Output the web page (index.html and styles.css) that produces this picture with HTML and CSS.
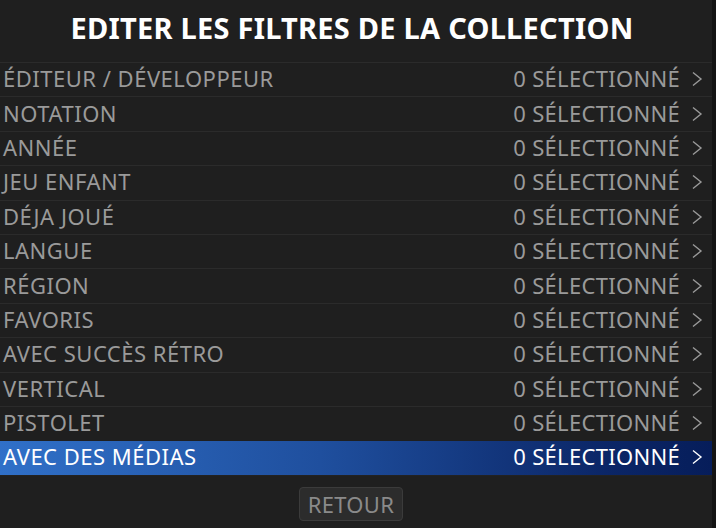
FILE: index.html
```html
<!DOCTYPE html>
<html lang="fr">
<head>
<meta charset="utf-8">
<link rel="stylesheet" href="styles.css">
</head>
<body>
<div class="screen">
  <h1 class="title">EDITER LES FILTRES DE LA COLLECTION</h1>
  <ul class="list">
    <li class="row"><span class="label">ÉDITEUR / DÉVELOPPEUR</span><span class="value">0 SÉLECTIONNÉ</span><svg class="chev" viewBox="0 0 12 16"><path d="M2 1.5 L10 8 L2 14.5"/></svg></li>
    <li class="row"><span class="label">NOTATION</span><span class="value">0 SÉLECTIONNÉ</span><svg class="chev" viewBox="0 0 12 16"><path d="M2 1.5 L10 8 L2 14.5"/></svg></li>
    <li class="row"><span class="label">ANNÉE</span><span class="value">0 SÉLECTIONNÉ</span><svg class="chev" viewBox="0 0 12 16"><path d="M2 1.5 L10 8 L2 14.5"/></svg></li>
    <li class="row"><span class="label">JEU ENFANT</span><span class="value">0 SÉLECTIONNÉ</span><svg class="chev" viewBox="0 0 12 16"><path d="M2 1.5 L10 8 L2 14.5"/></svg></li>
    <li class="row"><span class="label">DÉJA JOUÉ</span><span class="value">0 SÉLECTIONNÉ</span><svg class="chev" viewBox="0 0 12 16"><path d="M2 1.5 L10 8 L2 14.5"/></svg></li>
    <li class="row"><span class="label">LANGUE</span><span class="value">0 SÉLECTIONNÉ</span><svg class="chev" viewBox="0 0 12 16"><path d="M2 1.5 L10 8 L2 14.5"/></svg></li>
    <li class="row"><span class="label">RÉGION</span><span class="value">0 SÉLECTIONNÉ</span><svg class="chev" viewBox="0 0 12 16"><path d="M2 1.5 L10 8 L2 14.5"/></svg></li>
    <li class="row"><span class="label">FAVORIS</span><span class="value">0 SÉLECTIONNÉ</span><svg class="chev" viewBox="0 0 12 16"><path d="M2 1.5 L10 8 L2 14.5"/></svg></li>
    <li class="row"><span class="label">AVEC SUCCÈS RÉTRO</span><span class="value">0 SÉLECTIONNÉ</span><svg class="chev" viewBox="0 0 12 16"><path d="M2 1.5 L10 8 L2 14.5"/></svg></li>
    <li class="row"><span class="label">VERTICAL</span><span class="value">0 SÉLECTIONNÉ</span><svg class="chev" viewBox="0 0 12 16"><path d="M2 1.5 L10 8 L2 14.5"/></svg></li>
    <li class="row"><span class="label">PISTOLET</span><span class="value">0 SÉLECTIONNÉ</span><svg class="chev" viewBox="0 0 12 16"><path d="M2 1.5 L10 8 L2 14.5"/></svg></li>
    <li class="row selected"><span class="label">AVEC DES MÉDIAS</span><span class="value">0 SÉLECTIONNÉ</span><svg class="chev" viewBox="0 0 12 16"><path d="M2 1.5 L10 8 L2 14.5"/></svg></li>
  </ul>
  <div class="footer">
    <button class="btn">RETOUR</button>
  </div>
</div>
</body>
</html>
```
FILE: styles.css
```css
html, body {
  margin: 0;
  padding: 0;
  background: #151515;
}
.screen {
  width: 712px;
  height: 528px;
  background: #1f1f1f;
  border-right: 4px solid #141414;
  display: flex;
  flex-direction: column;
  font-family: "Noto Sans", "Open Sans", sans-serif;
  overflow: hidden;
}
.title {
  margin: 0;
  height: 62px;
  display: flex;
  align-items: center;
  justify-content: center;
  color: #ffffff;
  font-weight: 700;
  font-size: 29px;
  letter-spacing: 0.25px;
  padding: 0 8px 8px 0;
  box-sizing: border-box;
}
.list {
  list-style: none;
  margin: 0;
  padding: 0;
}
.row {
  height: 34.4px;
  box-sizing: border-box;
  border-top: 1px solid #2b2b2b;
  display: flex;
  align-items: center;
  padding: 0 9px 3px 3px;
  color: #9a9a9a;
  font-size: 22px;
  letter-spacing: 0.5px;
}
.label {
  flex: 1;
}
.value {
  margin-right: 11px;
  letter-spacing: 0.3px;
}
.chev {
  width: 12px;
  height: 16px;
  margin-top: 2px;
  fill: none;
  stroke: currentColor;
  stroke-width: 1.4;
}
.row.selected {
  background: linear-gradient(to right, #3070c8 0%, #1f4f9e 45%, #0b2667 85%, #061d5a 100%);
  color: #ffffff;
  border-top-color: #1f1f1f;
}
.footer {
  flex: 1;
  display: flex;
  justify-content: center;
  align-items: center;
  border-top: 1px solid #222222;
}
.btn {
  width: 104px;
  height: 34px;
  background: #2c2c2c;
  border: 1px solid #3b3b3b;
  border-radius: 4px;
  color: #8a8a8a;
  font-family: "Noto Sans", "Open Sans", sans-serif;
  font-size: 22px;
  letter-spacing: 0.3px;
  padding: 0;
  margin: 4px 10px 0 0;
}
```
